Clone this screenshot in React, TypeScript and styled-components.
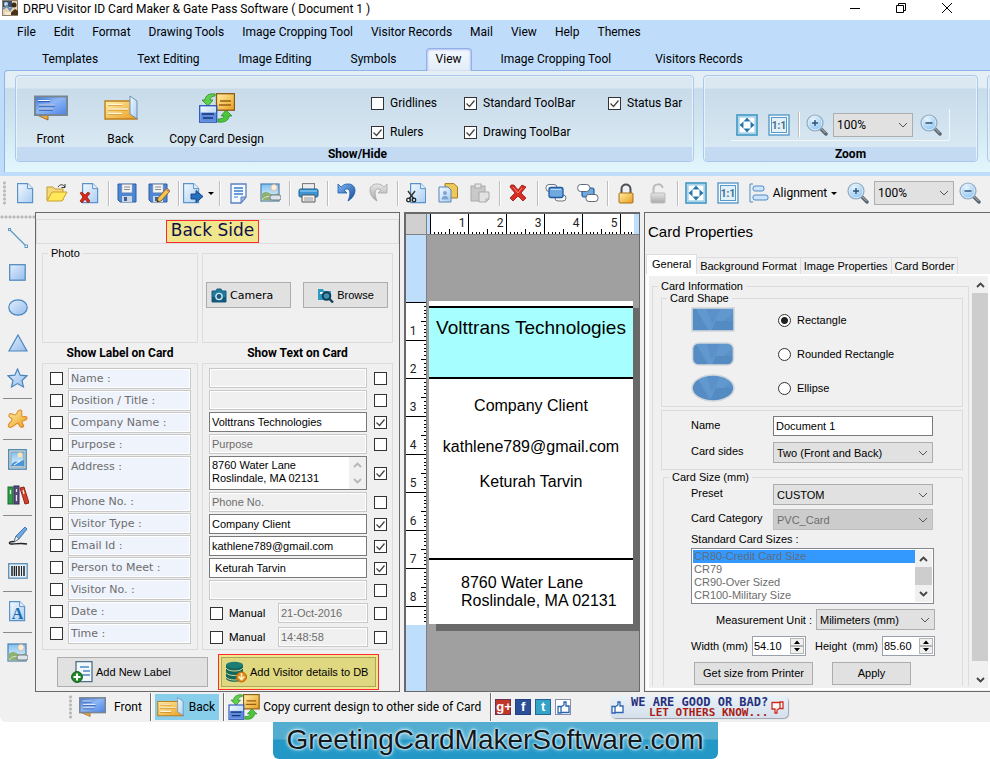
import React from "react";
import styled, { createGlobalStyle, css } from "styled-components";

const UI = 'Roboto, "Open Sans", sans-serif';
const SANS = '"Liberation Sans", Arial, sans-serif';
const WIDE = '"DejaVu Sans", Verdana, sans-serif';

const CHEVRON =
  "url(\"data:image/svg+xml,%3Csvg xmlns='http://www.w3.org/2000/svg' width='10' height='6'%3E%3Cpath d='M1 1l4 4 4-4' fill='none' stroke='%23555'/%3E%3C/svg%3E\")";
const CHECK =
  "url(\"data:image/svg+xml,%3Csvg xmlns='http://www.w3.org/2000/svg' width='11' height='11'%3E%3Cpath d='M1.5 5.5l3 3 5-6' fill='none' stroke='%23444' stroke-width='1.3'/%3E%3C/svg%3E\")";

const Global = createGlobalStyle`
  * { box-sizing: border-box; }
  body { margin: 0; background: #fff; font-family: ${SANS}; font-size: 11px; color: #000; }
  button, input, select, textarea { font: inherit; color: inherit; margin: 0; padding: 0; }
  svg { display: block; flex: none; }
`;

/* ---------- icons ---------- */

const Defs = () => (
  <svg width="0" height="0" aria-hidden="true">
    <defs>
      <linearGradient id="gPage" x1="0" y1="0" x2="1" y2="1">
        <stop offset="0" stopColor="#f4faff" /><stop offset="1" stopColor="#a9cdf3" />
      </linearGradient>
      <linearGradient id="gBlue" x1="0" y1="0" x2="1" y2="1">
        <stop offset="0" stopColor="#3f78dc" /><stop offset=".45" stopColor="#8db6f4" /><stop offset="1" stopColor="#4a83e6" />
      </linearGradient>
      <linearGradient id="gShape" x1="0" y1="0" x2="1" y2="1">
        <stop offset="0" stopColor="#e3effd" /><stop offset="1" stopColor="#94bbec" />
      </linearGradient>
      <linearGradient id="gGold" x1="0" y1="0" x2="1" y2="1">
        <stop offset="0" stopColor="#fff0a8" /><stop offset="1" stopColor="#e99c1c" />
      </linearGradient>
      <linearGradient id="gGray" x1="0" y1="0" x2="0" y2="1">
        <stop offset="0" stopColor="#e6e6e6" /><stop offset="1" stopColor="#a8a8a8" />
      </linearGradient>
      <linearGradient id="gSky" x1="0" y1="0" x2="0" y2="1">
        <stop offset="0" stopColor="#7fc0f2" /><stop offset="1" stopColor="#f2f9ff" />
      </linearGradient>
      <linearGradient id="gArrow" x1="0" y1="0" x2="1" y2="1">
        <stop offset="0" stopColor="#7db8f2" /><stop offset="1" stopColor="#154a9a" />
      </linearGradient>
      <radialGradient id="gLens" cx=".4" cy=".3" r=".8">
        <stop offset="0" stopColor="#e9f5fe" /><stop offset="1" stopColor="#7fbcee" />
      </radialGradient>
    </defs>
  </svg>
);

type IconProps = { w: number; h: number; vb?: string; children: React.ReactNode };
const Icon = ({ w, h, vb, children }: IconProps) => (
  <svg width={w} height={h} viewBox={vb || `0 0 ${w} ${h}`} aria-hidden="true">{children}</svg>
);

const AppIcon = () => (
  <Icon w={16} h={16}>
    <rect x=".5" y=".5" width="15" height="15" fill="#e7d3b4" stroke="#8c7d68" />
    <rect x="1" y="1" width="9" height="6" fill="#39506e" />
    <circle cx="4" cy="4" r="2" fill="#c9d9ea" /><path d="M1 9l4-3 3 4 2-3" stroke="#6a8fb5" strokeWidth="2" fill="none" />
    <circle cx="12" cy="5" r="2.5" fill="#3d2a16" /><path d="M6 15l7-6 3 2v4z" fill="#4a3418" /><path d="M3 12h6v3H3z" fill="#f5ead0" />
  </Icon>
);
const FrontIcon = ({ w = 34, h = 26 }: { w?: number; h?: number }) => (
  <Icon w={w} h={h} vb="0 0 34 26">
    <path d="M3 20h11v5z" fill="#f2a93b" stroke="#8a5a1c" strokeWidth=".8" />
    <rect x="1" y="1.500" width="32" height="18.500" fill="url(#gBlue)" stroke="#788694" strokeWidth="2" />
    <path d="M4 6h12M5 10.500h16M5 14.500h14" stroke="#2f5fb8" strokeWidth="2.400" />
    <path d="M4 5.500h12M5 10h16M5 14h14" stroke="#fff" strokeWidth="1.200" />
  </Icon>
);
const BackIcon = ({ w = 34, h = 26 }: { w?: number; h?: number }) => (
  <Icon w={w} h={h} vb="0 0 34 26">
    <path d="M1 6h27l5 18H1z" fill="url(#gGold)" stroke="#c07f1c" strokeWidth="1.400" />
    <path d="M26 1l7 5v18l-7-5z" fill="url(#gPage)" stroke="#6d8fb3" />
    <path d="M4 10h14M4 14.500h20M4 19h14" stroke="#d08a20" strokeWidth="2.200" />
    <path d="M4 9.500h14M4 14h20M4 18.500h14" stroke="#fff8dc" strokeWidth="1.300" />
  </Icon>
);
const SwapIcon = ({ w = 36, h = 30 }: { w?: number; h?: number }) => (
  <Icon w={w} h={h} vb="0 0 36 30">
    <path d="M16 1C10 0 6 3 6 7H3l6 6 5-6h-3c0-2 2-4 5-4z" fill="#5fd04a" stroke="#2c8a24" strokeWidth=".8" />
    <path d="M19 29c7 1 11-2 11-6h3l-6-6-5 6h3c0 2-2 3-6 3z" fill="#4cc63a" stroke="#2c8a24" strokeWidth=".8" />
    <rect x="17.500" y=".7" width="18" height="16.500" fill="url(#gGold)" stroke="#8a5a10" strokeWidth="1.300" />
    <path d="M21 8h11M20 12h12" stroke="#9a5d10" strokeWidth="1.400" />
    <rect x=".7" y="12.700" width="17" height="16.500" fill="url(#gPage)" stroke="#2a56b4" strokeWidth="1.300" />
    <path d="M1.500 19.500h15.500v9H1.500z" fill="#5e8be0" /><path d="M3 21h12M4 25h10" stroke="#17346f" strokeWidth="1.400" />
  </Icon>
);
const FitIcon = () => (
  <Icon w={22} h={22}>
    <rect x="1" y="1" width="20" height="20" fill="#cfe9f5" stroke="#3f97c4" strokeWidth="1.600" />
    <rect x="3" y="3" width="16" height="16" fill="#fff" stroke="#6fb3d6" strokeWidth=".8" />
    <path d="M11 3.500l3.500 4h-7zM11 18.500l3.500-4h-7zM3.500 11l4-3.500v7zM18.500 11l-4-3.500v7z" fill="#2573a9" />
    <path d="M7.500 7.500h7v7h-7z" fill="none" stroke="#9cc7de" strokeWidth=".6" />
  </Icon>
);
const OneIcon = () => (
  <Icon w={22} h={22}>
    <rect x="1" y="1" width="20" height="20" fill="#f3f9fd" stroke="#5b9ac8" strokeWidth="1.400" />
    <rect x="3.500" y="3.500" width="15" height="15" fill="#e2f0f8" stroke="#5b9ac8" />
    <text x="11" y="15" textAnchor="middle" fontSize="10" fontWeight="700" fontFamily={UI} fill="#3c6f8c">1:1</text>
  </Icon>
);
const Lens = ({ plus }: { plus?: boolean }) => (
  <Icon w={22} h={22}>
    <path d="M14.500 14.500l5.500 5.500" stroke="#5c6670" strokeWidth="3.400" strokeLinecap="round" />
    <path d="M14 13.500l5.500 5.500" stroke="#b9c2ca" strokeWidth="1" />
    <circle cx="9" cy="9" r="8" fill="url(#gLens)" stroke="#93a9bc" strokeWidth="1.200" />
    <circle cx="9" cy="9" r="6.800" fill="none" stroke="#e3f1fb" strokeWidth=".8" />
    <path d={plus ? "M6 9h6M9 6v6" : "M5.500 9h7"} stroke="#2c4f74" strokeWidth="1.400" />
  </Icon>
);
const Page = () => (
  <>
    <path d="M.6.6h10l5 5v14H.6z" fill="url(#gPage)" stroke="#5b93c9" strokeWidth="1.200" />
    <path d="M10.600.6v5h5" fill="#e8f3fd" stroke="#5b93c9" />
  </>
);
const NewIcon = () => <Icon w={17} h={21}><Page /></Icon>;
const OpenIcon = () => (
  <Icon w={22} h={20}>
    <path d="M1 17V4h6l2 2h8v11z" fill="#f6d978" stroke="#c09a30" /><path d="M1 18L6 9h15l-5 9z" fill="#ffe85a" stroke="#c9a02c" />
    <path d="M12 4c2-3 5-3 7 0M19 1v3.500h-3.500" stroke="#333" fill="none" />
  </Icon>
);
const RedX = () => (
  <Icon w={18} h={18}>
    <path d="M2 1l3 0 4 5 4-5 4 2-5 6 5 5-3 3-5-5-5 5-3-3 5-5-5-6z" fill="#dd2c20" stroke="#8d1a12" strokeWidth=".8" />
    <path d="M4 3l5 6 4-5" stroke="#f58a80" fill="none" />
  </Icon>
);
const DelDocIcon = () => (
  <Icon w={20} h={21}>
    <g transform="translate(3 0)"><Page /></g>
    <path d="M1 10l2-1 3 3 3-3 2 1.500-3 3.500 3 4-2 2-3-4-3 4-2-2 3-4z" fill="#d8281c" stroke="#8d1a12" strokeWidth=".7" />
  </Icon>
);
const Disk = () => (
  <>
    <path d="M1 1h18v18H3l-2-2z" fill="#4d86d4" stroke="#2f5da8" /><rect x="5" y="1.500" width="10" height="8" fill="#f3f3f3" stroke="#b5b5b5" strokeWidth=".6" />
    <path d="M7 4h6M7 6.500h6" stroke="#8a8a8a" /><rect x="5" y="13" width="10" height="6" fill="#cdd6e0" /><rect x="7" y="14" width="3" height="4" fill="#3f5f90" />
  </>
);
const Pencil = () => (
  <>
    <path d="M19 5l3 3-9 10-4 1 1-4z" fill="#f6c453" stroke="#7b5a1c" strokeWidth=".9" /><path d="M19 5l3 3-1.500 1.500-3-3z" fill="#c98a76" /><path d="M9 19l.6-2 1.600 1.400z" fill="#222" />
  </>
);
const SaveIcon = () => <Icon w={20} h={20}><Disk /></Icon>;
const SaveEditIcon = () => <Icon w={22} h={20}><Disk /><Pencil /></Icon>;
const ExportIcon = () => (
  <Icon w={21} h={21}>
    <Page /><path d="M8 11h5V7.500l7 6-7 6V16H8z" fill="#2470bd" stroke="#143f7d" strokeWidth=".9" />
  </Icon>
);
const NoteIcon = () => (
  <Icon w={17} h={21}>
    <path d="M1 1h15v13l-5 6H1z" fill="#f4f9ff" stroke="#5c7fc0" strokeWidth="1.300" /><path d="M4 5h9M4 8h9M4 11h9" stroke="#3a7cd0" strokeWidth="1.400" />
    <path d="M16 14h-5v6z" fill="#9dbde8" stroke="#5c7fc0" /><path d="M4 14h4" stroke="#3a7cd0" />
  </Icon>
);
const PictureIcon = () => (
  <Icon w={21} h={20}>
    <rect x="1" y="1" width="18" height="17" fill="url(#gSky)" stroke="#4c7fb2" strokeWidth="1.200" />
    <path d="M1.500 11c5-4 7-1 10 0s5 0 7-1v7.500h-17z" fill="#8fb074" /><path d="M2 17c3-4 7-4 10-3" stroke="#dbe9cb" fill="none" />
    <circle cx="14" cy="4.500" r="3" fill="#fff3df" stroke="#e8b48a" strokeWidth=".8" /><rect x="10" y="12" width="11" height="5" rx="2" fill="#dfe4ea" stroke="#6a7580" strokeWidth=".9" />
  </Icon>
);
const PrinterIcon = () => (
  <Icon w={21} h={20}>
    <rect x="4.500" y=".6" width="12" height="8" fill="#ececec" stroke="#777" /><rect x="1" y="6" width="19" height="8" rx="1.500" fill="#3b95d2" stroke="#1b5f96" />
    <path d="M2 8h17" stroke="#a6d6f5" /><path d="M4 12h13v7H4z" fill="#f2f2f2" stroke="#555" /><path d="M6 15h9M6 17h9" stroke="#999" />
  </Icon>
);
const UndoIcon = ({ gray }: { gray?: boolean }) => (
  <Icon w={19} h={20}>
    <path
      transform={gray ? "translate(19 0) scale(-1 1)" : undefined}
      d="M1 1v9h9L7 7c5-3 8 1 4 11 10-6 9-18-1-17-2 0-4 1-6 3z"
      fill={gray ? "url(#gGray)" : "url(#gArrow)"} stroke={gray ? "#a6a6a6" : "#1f5cae"} strokeWidth=".8"
    />
  </Icon>
);
const CutIcon = () => (
  <Icon w={20} h={21}>
    <g transform="translate(4 0)"><Page /></g>
    <path d="M2 8l6 8M9 8l-6 8" stroke="#333" strokeWidth="1.400" /><circle cx="2.500" cy="17" r="1.800" fill="none" stroke="#222" strokeWidth="1.300" /><circle cx="8" cy="17" r="1.800" fill="none" stroke="#222" strokeWidth="1.300" />
  </Icon>
);
const CopyIcon = () => (
  <Icon w={20} h={20}>
    <path d="M7 .6h9l3.500 3.500V15H7z" fill="#ecc95a" stroke="#a37c22" /><path d="M1 4h9l3 3v12H1z" fill="url(#gPage)" stroke="#5b84b5" />
    <circle cx="7" cy="10" r="2" fill="#7fa4d2" /><path d="M3.500 16.500c0-5 7-5 7 0z" fill="#7fa4d2" />
  </Icon>
);
const PasteIcon = () => (
  <Icon w={20} h={20}>
    <rect x="1" y="3" width="14" height="15" fill="#c9c9c9" stroke="#a9a9a9" /><rect x="5" y="1" width="6" height="4" fill="#e5e5e5" stroke="#a9a9a9" /><path d="M9 9h10v7l-3 3H9z" fill="#e2e2e2" stroke="#a9a9a9" /><path d="M19 16h-3v3" fill="none" stroke="#a9a9a9" />
  </Icon>
);
const LayerFrontIcon = () => (
  <Icon w={22} h={20}>
    <rect x="1" y="1.500" width="11" height="7" rx="3" fill="#f6f6f6" stroke="#6a7885" /><rect x="10" y="12" width="11" height="6" rx="3" fill="#f6f6f6" stroke="#6a7885" />
    <rect x="4" y="4.500" width="14" height="10" rx="2" fill="#6fa9e0" stroke="#1f5c9f" strokeWidth="1.300" /><path d="M6 6.500h10" stroke="#b9dafa" />
  </Icon>
);
const LayerBackIcon = () => (
  <Icon w={22} h={20}>
    <rect x="5" y="5" width="12" height="9" rx="2" fill="#6fa9e0" stroke="#1f5c9f" strokeWidth="1.200" />
    <rect x=".7" y="1.500" width="12" height="7" rx="3" fill="#fff" stroke="#5c6a77" /><rect x="9" y="11.500" width="12" height="7" rx="3" fill="#fff" stroke="#5c6a77" />
  </Icon>
);
const LockIcon = ({ open }: { open?: boolean }) => (
  <Icon w={16} h={21}>
    <path d={open ? "M3.500 11V6c0-6 9-6 9-1" : "M3.500 11V6c0-6 9-6 9 0v5"} fill="none" stroke={open ? "#b9b9b9" : "#4a4f55"} strokeWidth="2" />
    <rect x="1" y="10" width="14" height="10" rx="1" fill={open ? "url(#gGray)" : "url(#gGold)"} stroke={open ? "#bcbcbc" : "#a96e12"} />
  </Icon>
);
const AlignIcon = () => (
  <Icon w={20} h={20}>
    <path d="M4 1H1v18h3" fill="none" stroke="#4c8bc4" /><rect x="4" y="3" width="11" height="5" rx="2" fill="#cfe4fa" stroke="#4c8bc4" /><rect x="4" y="12" width="15" height="5" rx="2" fill="#cfe4fa" stroke="#4c8bc4" />
  </Icon>
);
const LineIcon = () => (
  <Icon w={20} h={20}><path d="M2 2l16 16" stroke="#5a9ac4" strokeWidth="1.300" /><rect x=".5" y=".5" width="2" height="2" fill="#fff" stroke="#5a9ac4" /><rect x="17" y="17" width="2.500" height="2.500" fill="#fff" stroke="#5a9ac4" /></Icon>
);
const SquareIcon = () => <Icon w={17} h={17}><rect x=".7" y=".7" width="15.500" height="15.500" fill="url(#gShape)" stroke="#4a86bd" strokeWidth="1.200" /></Icon>;
const EllipseIcon = () => <Icon w={20} h={17}><ellipse cx="10" cy="8.500" rx="9.200" ry="7.700" fill="url(#gShape)" stroke="#4a86bd" strokeWidth="1.200" /></Icon>;
const TriangleIcon = () => <Icon w={20} h={18}><path d="M10 1l9 16H1z" fill="url(#gShape)" stroke="#4a86bd" strokeWidth="1.200" /></Icon>;
const StarIcon = () => <Icon w={21} h={20}><path d="M10.500 1l2.700 6.200 6.800.6-5 4.700 1.500 6.500-6-3.400-6 3.400L6 12.500 1 7.800l6.800-.6z" fill="url(#gShape)" stroke="#4a86bd" strokeWidth="1.200" /></Icon>;
const ClipIcon = () => <Icon w={21} h={20}><path d="M13 1c3 0 1 4 2 6s5-1 5 2-5 2-5 4 3 4 1 5-4-1-5-4c-2 0-6 6-9 4s4-6 3-8-4-1-3-4 4 0 6 0 2-5 5-5z" fill="url(#gGold)" stroke="#e08a2a" strokeWidth="1.100" /></Icon>;
const FrameIcon = () => (
  <Icon w={19} h={21}>
    <rect x=".7" y=".7" width="17.500" height="19.500" fill="#cfe0ea" stroke="#4a87ad" strokeWidth="1.300" /><rect x="3" y="3" width="13" height="15" fill="url(#gSky)" stroke="#8a9aa6" />
    <circle cx="12" cy="6" r="2.500" fill="#ffe7ae" /><path d="M3 17c2-5 5-5 7-4s4-2 6-2v6z" fill="#4a95d8" /><path d="M6 16l6-4" stroke="#fff" />
  </Icon>
);
const BooksIcon = () => (
  <Icon w={22} h={20}>
    <rect x="1" y="2" width="5" height="17" fill="#2f9d48" stroke="#1c6a2e" /><rect x="7" y="1" width="5" height="18" fill="#5a4a80" stroke="#332a50" /><path d="M13 3l4-1 5 16-4 1z" fill="#d8402c" stroke="#8a2416" />
    <path d="M3.500 5v4M9.500 4v3M9.500 10v6M16 5l1 4" stroke="#e8e8e8" strokeWidth="1.300" />
  </Icon>
);
const PenIcon = () => (
  <Icon w={20} h={20}><path d="M17 1l2 2-8 10-5 3 2-6z" fill="#6fa8e2" stroke="#3a6fa8" strokeWidth=".9" /><path d="M6 16l2-6 3 3z" fill="#e4edf5" stroke="#555" strokeWidth=".6" /><path d="M6 15.500c-6 0-6 3-1 2.500s9-1 14 0" stroke="#222" strokeWidth="1.400" fill="none" /></Icon>
);
const BarcodeIcon = () => (
  <Icon w={20} h={16}><rect x=".7" y=".7" width="18.500" height="14.500" fill="#e4eef6" stroke="#5a8fb8" strokeWidth="1.300" /><path d="M4 3v10M6.500 3v10M11 3v10M16 3v10" stroke="#222" strokeWidth="1.500" /><path d="M8.500 3v10M13.500 3v10" stroke="#222" /></Icon>
);
const LetterIcon = () => (
  <Icon w={17} h={21}><Page /><text x="8.500" y="18" textAnchor="middle" fontSize="16" fontWeight="700" fontFamily='"Liberation Serif", serif' fill="#1c6cae">A</text></Icon>
);
const CameraIcon = () => (
  <Icon w={16} h={15}><path d="M1 3h4l1-2h4l1 2h4v11H1z" fill="#1f7a9e" stroke="#175d7c" /><path d="M1 9h14v5H1z" fill="#11597a" /><circle cx="8" cy="8.500" r="3.800" fill="#cfe9f3" /><circle cx="8" cy="8.500" r="2.400" fill="#1b5b7c" /></Icon>
);
const BrowseIcon = () => (
  <Icon w={17} h={15}><path d="M1 12V1h5l1 2h7v9z" fill="#2e9ac4" /><path d="M3 4h10v2H3z" fill="#e3f5fb" /><circle cx="9.500" cy="8" r="3.800" fill="#3f93b4" stroke="#123e54" strokeWidth="2" /><path d="M12.500 11l3.500 3.500" stroke="#123e54" strokeWidth="2.400" /></Icon>
);
const AddLabelIcon = () => (
  <Icon w={22} h={22}><path d="M5 .7h16v20H5z" fill="#f2f7fb" stroke="#4c7088" strokeWidth="1.300" /><path d="M9 6h9M12 10h7M9 14h10" stroke="#4f8ac2" strokeWidth="1.400" /><circle cx="6" cy="16" r="5.400" fill="#1f8a28" stroke="#0f5a18" /><path d="M2.500 16h7M6 12.500v7" stroke="#fff" strokeWidth="2" /></Icon>
);
const DbIcon = () => (
  <Icon w={22} h={22}><path d="M1 4v13c0 5 17 5 17 0V4z" fill="#12685f" /><ellipse cx="9.500" cy="4" rx="8.500" ry="3.300" fill="#1b7d74" /><path d="M1 7c2 4 15 4 17 0M1 11.500c2 4 15 4 17 0M1 16c2 4 15 4 17 0" stroke="#dfd98a" strokeWidth="1" fill="none" /><circle cx="16.500" cy="16" r="5" fill="#e08a1c" stroke="#b9680c" /><path d="M16.500 12v6M13.500 15.500l3 3 3-3" stroke="#fff3c4" strokeWidth="1.700" fill="none" /></Icon>
);
const Facets = () => (
  <><rect width="44" height="28" fill="#5b91c8" /><path d="M3 0h12l6 18L30 0h14v5L14 28z" fill="#6198ce" /><path d="M30 0L19 28h25V14H24z" fill="#558bc3" /><path d="M0 0h4l14 24-2 4H0z" fill="#568cc4" /></>
);
const ShapeIcon = ({ kind }: { kind: "rect" | "round" | "oval" }) => {
  const shape = (extra: object) =>
    kind === "rect" ? <rect x="1" y="1" width="42" height="23" {...extra} />
      : kind === "round" ? <rect x="1.500" y="1" width="41" height="22" rx="6" {...extra} />
      : <ellipse cx="22" cy="14" rx="21" ry="13" {...extra} />;
  const h = kind === "oval" ? 28 : kind === "rect" ? 26 : 24;
  return (
    <Icon w={44} h={h}>
      <clipPath id={`clip-${kind}`}>{shape({})}</clipPath>
      <g clipPath={`url(#clip-${kind})`}><Facets /></g>
      {shape({ fill: "none", stroke: "#d3d7db", strokeWidth: 1.6 })}
    </Icon>
  );
};
const Thumb = ({ down }: { down?: boolean }) => (
  <Icon w={13} h={13}>
    <path transform={down ? "rotate(180 6.500 6.500)" : undefined} d="M1 5.500h3v6.500H1zM4 6l3-2V1h2v4h3v6.500H4" fill="#fff" stroke={down ? "#d02a20" : "#2a63b0"} strokeWidth="1.300" />
  </Icon>
);

/* ---------- shared controls ---------- */

const CheckBox = styled.input.attrs({ type: "checkbox" })`
  appearance: none;
  flex: none;
  width: 13px;
  height: 13px;
  border: 1px solid #333;
  background: #fff center no-repeat;
  &:checked { background-image: ${CHECK}; }
`;

const Combo = styled.select<{ $w?: number; $h?: number; $size?: number }>`
  appearance: none;
  width: ${(p) => (p.$w ? `${p.$w}px` : "100%")};
  height: ${(p) => p.$h || 21}px;
  padding: 0 22px 0 3px;
  border: 1px solid #adadad;
  border-radius: 0;
  background: #e1e1e1 ${CHEVRON} right 4px center no-repeat;
  font-size: ${(p) => p.$size || 11}px;
  &:disabled { background-color: #ccc; color: #6d6d6d; border-color: #bfbfbf; opacity: 1; }
`;

const ZoomCombo = styled(Combo)`font-family: ${UI};`;

const PlainButton = styled.button`
  display: flex;
  align-items: center;
  justify-content: center;
  border: 0;
  background: none;
`;

/* ---------- title, menu, tabs ---------- */

const Shell = styled.div`display: flex; flex-direction: column; min-height: 100vh; overflow: hidden;`;

const TitleBar = styled.header`
  display: flex;
  align-items: flex-start;
  gap: 5px;
  height: 20px;
  padding: 0 23px 0 2px;
  background: #fff;
  font: 12px/18px ${UI};
`;
const WindowTitle = styled.h1`flex: 1; margin: 0; font: inherit;`;
const WindowButton = styled(PlainButton)`width: 41px; height: 15px;`;

const MenuBar = styled.nav`
  display: flex;
  height: 24px;
  padding-left: 8px;
  background: #bfddfb;
  font: 12px/24px ${UI};
`;
const MenuLink = styled.a`padding: 0 9px; color: #000; text-decoration: none; white-space: nowrap;`;

const TabBar = styled.div`
  display: flex;
  align-items: flex-end;
  height: 26px;
  padding-left: 22px;
  background: #bfddfb;
`;
const RibbonTab = styled.button<{ $on?: boolean }>`
  height: 23px;
  margin: 0 9px -1px 10px;
  padding: 0 9px 3px;
  border: 1px solid transparent;
  border-bottom: 0;
  border-radius: 4px 4px 0 0;
  background: none;
  font: 12px/18px ${UI};
  white-space: nowrap;
  &:last-child { margin-left: 15px; }
  ${(p) => p.$on && css`
    position: relative;
    border-color: #8fb0ea;
    background: linear-gradient(#f4f8ff, #e2edf6);
    box-shadow: inset 1px 1px 2px #b8c4f0, inset -1px 0 2px #b8c4f0;
  `}
`;

/* ---------- ribbon ---------- */

const Ribbon = styled.section`
  display: grid;
  grid-template-columns: minmax(0, 1fr) 275px 12px;
  column-gap: 9px;
  height: 102px;
  margin: 0 -9px 0 4px;
  padding: 4px 0 10px 10px;
  border: 1px solid #8fb5e8;
  border-width: 1px 0 0 1px;
  border-radius: 4px 0 0 0;
  background: linear-gradient(#e4eef5 0 16px, #c8dcec 18px, #d3e8f1 60%, #e2f7fc);
  overflow: hidden;
`;
const RibbonWrap = styled.div`background: #bfddfb; padding-bottom: 4px;`;
const Panel = styled.div`
  display: flex;
  flex-direction: column;
  border: 1px solid #a9c8ea;
  border-radius: 4px;
  background: linear-gradient(#dbe8f2 0 12px, #c8dbea 13px, #d6e6f1 75%, #dff2f9);
  box-shadow: inset 0 0 0 1px #e8f2fa;
`;
const PanelBody = styled.div`display: flex; flex: 1;`;
const PanelCaption = styled.h2<{ $indent?: number }>`
  margin: 0 1px;
  height: 14px;
  padding-left: ${(p) => p.$indent || 0}px;
  background: #c3daf2;
  text-align: center;
  font: bold 12px/15px ${UI};
`;
const BigButton = styled.button<{ $w: number }>`
  display: grid;
  grid-template-rows: 32px 16px;
  row-gap: 7px;
  place-items: center;
  align-self: start;
  width: ${(p) => p.$w}px;
  padding: 16px 0 0;
  border: 0;
  background: none;
  font: 12px/16px ${UI};
  white-space: nowrap;
`;
const CheckGrid = styled.div`
  display: grid;
  grid-template: 15px 15px / 93px 144px auto;
  row-gap: 14px;
  margin: 20px 0 0 94px;
  align-content: start;
`;
const CheckLabel = styled.label`
  display: flex;
  align-items: center;
  gap: 6px;
  font: 12px/15px ${UI};
  white-space: nowrap;
`;
const ZoomStrip = styled.div`
  display: flex;
  align-items: center;
  align-self: flex-start;
  height: 32px;
  margin: 33px 0 0 27px;
  border: 1px solid #f2f7fb;
  border-width: 0 1px 1px 0;
  border-radius: 0 0 3px 0;
`;
const ToolButton = styled(PlainButton)<{ $w?: number; $h?: number }>`
  flex: none;
  width: ${(p) => p.$w || 32}px;
  height: ${(p) => p.$h || 32}px;
  gap: 4px;
`;
const VLine = styled.span<{ $w?: number; $dark?: boolean; $h?: number }>`
  display: flex;
  flex: none;
  justify-content: center;
  width: ${(p) => p.$w || 6}px;
  height: ${(p) => p.$h || 25}px;
  &::before { content: ""; width: 1px; background: ${(p) => (p.$dark ? "#707070" : "#bdbdbd")}; box-shadow: 1px 0 #fff; }
`;
const HLine = styled.span`
  display: flex;
  align-items: center;
  width: 29px;
  height: 6px;
  &::before { content: ""; flex: 1; height: 1px; background: #8a8a8a; }
`;
const Caret = styled.span`border: 3px solid transparent; border-top-color: #000; border-bottom: 0;`;

/* ---------- toolbars ---------- */

const Toolbar = styled.div`
  display: flex;
  align-items: center;
  height: 36px;
  padding-bottom: 2px;
  background: #f0f0f0;
  font: 12px/16px ${UI};
`;
const Grip = styled.span<{ $side?: boolean; $w?: number }>`
  flex: none;
  width: ${(p) => (p.$side ? 35 : p.$w || 9)}px;
  height: ${(p) => (p.$side ? 8 : 24)}px;
  background: ${(p) =>
    p.$side
      ? "radial-gradient(circle, #b8b8b8 1px, transparent 2px) 0 3px / 4px 4px repeat-x"
      : "radial-gradient(circle, #b8b8b8 1px, transparent 2px) 3px 0 / 3px 4px repeat-y"};
`;
const SideBar = styled.aside`display: flex; flex-direction: column; align-items: center; background: #f0f0f0;`;

const Work = styled.main`
  display: grid;
  grid-template-columns: 35px 365px minmax(0, 1fr) 346px;
  height: 480px;
  background: #f0f0f0;
`;

/* ---------- visitor form ---------- */

const FormPane = styled.section`
  display: flex;
  flex-direction: column;
  border: 1px solid #696969;
  padding-top: 6px;
`;
const SideHeader = styled.div`
  display: flex;
  justify-content: center;
  padding-right: 10px;
  height: 25px;
  border: 1px solid #dcdcdc;
`;
const SideName = styled.h2`
  margin: 0;
  height: 23px;
  padding: 0 4px;
  border: 1px solid #ff2a2a;
  background: #f0e68c;
  color: #10104a;
  font: 17px/18px ${WIDE};
`;
const TwoCols = styled.div`
  display: grid;
  grid-template-columns: 156fr 191fr;
  column-gap: 4px;
  padding: 0 6px;
`;
const Group = styled.fieldset<{ $open?: boolean }>`
  min-width: 0;
  margin: 0;
  padding: 0;
  border: 1px solid #dcdcdc;
  ${(p) => p.$open && "border-bottom: 0;"}
`;
const Legend = styled.legend`margin-left: 5px; padding: 0 3px; line-height: 12px; font-size: 11px;`;
const PhotoGroup = styled(Group)`height: 96px; margin-top: 3px;`;
const PhotoButtons = styled(Group)`
  display: flex;
  align-items: flex-start;
  justify-content: space-between;
  height: 90px;
  margin-top: 9px;
  padding: 28px 4px 0 3px;
`;
const PushButton = styled.button<{ $w?: number; $h?: number; $wide?: boolean }>`
  display: flex;
  align-items: center;
  justify-content: ${(p) => (p.$wide ? "flex-start" : "center")};
  gap: 3px;
  width: ${(p) => p.$w || 85}px;
  height: ${(p) => p.$h || 26}px;
  padding: 0 4px;
  border: 1px solid #adadad;
  background: #e1e1e1;
  font: 11px/13px ${(p) => (p.$wide ? WIDE : SANS)};
  white-space: nowrap;
`;
const ColumnTitle = styled.h3`margin: 0; text-align: center; font: bold 12px/20px ${UI};`;
const List = styled(Group)<{ $left?: boolean }>`
  display: flex;
  flex-direction: column;
  gap: ${(p) => (p.$left ? 1 : 2)}px;
  height: 287px;
  padding: ${(p) => (p.$left ? "4px 6px 0 7px" : "4px 5px 0 6px")};
`;
const Row = styled.div<{ $gap: number; $h: number }>`display: flex; align-items: center; gap: ${(p) => p.$gap}px; height: ${(p) => p.$h}px;`;
const Caption = styled.input`
  flex: 1;
  min-width: 0;
  height: 100%;
  padding: 1px 2px;
  border: 1px solid #c8c8c8;
  background: #eff3fc;
  color: #6d6d6d;
  font: 11px/13px ${WIDE};
  box-shadow: inset 0 0 0 1px #fff;
`;
const TallCaption = styled(Caption).attrs({ as: "textarea" })`resize: none; overflow: hidden; padding: 3px 2px;`;
const Field = styled.input<{ $w?: number }>`
  flex: ${(p) => (p.$w ? "none" : 1)};
  width: ${(p) => (p.$w ? `${p.$w}px` : "auto")};
  min-width: 0;
  height: 20px;
  padding: 0 2px;
  border: 1px solid #7a7a7a;
  background: #fff;
  font: 11px/13px ${SANS};
  &:disabled { background: #f0f0f0; border-color: #c8c8c8; color: #6d6d6d; box-shadow: inset 0 0 0 1px #fff; }
`;
const AddressBox = styled.div`display: flex; flex: 1; height: 34px; border: 1px solid #7a7a7a; background: #fff;`;
const AddressText = styled.textarea`flex: 1; min-width: 0; resize: none; border: 0; overflow: hidden; padding: 2px; font: 11px/13px ${SANS};`;
const ScrollTrack = styled.div<{ $w: number }>`
  display: flex;
  flex: none;
  flex-direction: column;
  justify-content: space-between;
  width: ${(p) => p.$w}px;
  background: #f0f0f0;
`;
const ScrollButton = styled(PlainButton)<{ $h: number }>`width: 100%; height: ${(p) => p.$h}px;`;
const ScrollThumb = styled.div<{ $grow: number }>`flex: ${(p) => p.$grow}; background: #cdcdcd;`;
const ScrollRest = styled.div<{ $grow: number }>`flex: ${(p) => p.$grow};`;
const ManualLabel = styled(CheckLabel)`width: 69px; padding-left: 1px; font: 11px/13px ${UI};`;
const FormActions = styled.div`display: flex; align-items: center; gap: 10px; padding: 3px 0 0 21px; flex: 1;`;
const Highlight = styled.div`padding: 2px; border: 1px solid #ff2a2a; background: #f0e68c;`;
const AddButton = styled(PushButton)`justify-content: flex-start; padding-left: 13px;`;
const DbButton = styled(PushButton)`justify-content: flex-start; padding-left: 3px; background: #e0d880; border-color: #aba55e;`;

/* ---------- card canvas ---------- */

const CanvasPane = styled.section`
  display: grid;
  grid-template: 20px minmax(0, 1fr) / 20px minmax(0, 1fr);
  gap: 1px;
  margin: 0 4px;
  border: 1px solid #696969;
  border-width: 2px 1px 1px 2px;
  background: #808080;
`;
const Corner = styled.div`background: #d0d0d0;`;
const RulerBox = styled.div`background: #bfdefc; overflow: hidden;`;
const Desk = styled.div`padding: 66px 0 0 2px; background: #a0a0a0; overflow: hidden;`;
const Card = styled.article`
  width: 204px;
  height: 323px;
  padding-top: 5px;
  background: #fff;
  box-shadow: 7px 7px 0 #696969;
  text-align: center;
  font: 16px/18px ${SANS};
`;
const CardHead = styled.h2`
  margin: 0 0 18px;
  height: 73px;
  padding-top: 9px;
  border: 2px solid #000;
  border-width: 2px 0;
  background: #a6fffe;
  font: 19px/22px ${SANS};
  white-space: nowrap;
`;
const CardLine = styled.p<{ $after: number }>`margin: 0 0 ${(p) => p.$after}px;`;
const CardFoot = styled.address`padding: 14px 0 0 32px; border-top: 2px solid #000; text-align: left; font-style: normal; white-space: nowrap;`;

const CM = 38;
const Ruler = ({ cm, length, vertical }: { cm: number; length: number; vertical?: boolean }) => {
  const start = vertical ? 67 : 3;
  const ticks: React.ReactNode[] = [];
  for (let mm = 0; mm * 3.8 < length; mm++) {
    const at = start + Math.round(mm * (CM / 10)) + 0.5;
    const len = mm % 10 === 0 ? 20 : mm % 5 === 0 ? 5 : 2;
    ticks.push(<path key={mm} stroke="#000" d={vertical ? `M${20 - len} ${at}H20` : `M${at} ${20 - len}V20`} />);
  }
  const nums = Array.from({ length: cm }, (_, i) => i + 1);
  return (
    <Icon w={vertical ? 20 : start + length} h={vertical ? start + length : 20}>
      {vertical ? <rect y={start} width="20" height={length} fill="#fff" /> : <rect x={start} width={length} height="20" fill="#fff" />}
      {ticks}
      {nums.map((n) => (
        <text key={n} fontFamily={UI} fontSize="12" fill="#222" textAnchor="middle"
          x={vertical ? 7 : start + n * CM - 6} y={vertical ? start + n * CM - 5 : 13}>{n}</text>
      ))}
    </Icon>
  );
};

/* ---------- properties ---------- */

const PropsPane = styled.section`
  display: flex;
  flex-direction: column;
  min-width: 0;
  border: 1px solid #696969;
  border-right: 0;
  padding: 0 0 1px 1px;
`;
const PropsTitle = styled.h2`margin: 8px 0 12px 2px; font: 15px/21px ${SANS};`;
const PropTabs = styled.div`display: flex; align-items: flex-end; height: 20px;`;
const PropTab = styled.button<{ $on?: boolean }>`
  height: ${(p) => (p.$on ? 20 : 17)}px;
  padding: 0 ${(p) => (p.$on ? 5 : 3)}px;
  border: 1px solid #dcdcdc;
  border-bottom: 0;
  border-left-width: ${(p) => (p.$on ? 1 : 0)}px;
  background: ${(p) => (p.$on ? "#fff" : "#f0f0f0")};
  font: 11px/15px ${SANS};
  white-space: nowrap;
`;
const PropPage = styled.div`display: flex; flex: 1; min-height: 0; padding: 2px 2px 2px 3px; background: #fff;`;
const PropBody = styled.div`flex: 1; min-width: 0; padding: 4px 3px 0; background: #f0f0f0; overflow: hidden;`;
const InfoBody = styled.div`padding: 0 5px 0 8px;`;
const ShapeOption = styled.label`display: grid; grid-template-columns: 44px 13px auto; column-gap: 43px; align-items: center; height: 34px; padding: 0 0 2px 29px;`;
const OptionText = styled.span`margin-left: -37px;`;
const Radio = styled.input.attrs({ type: "radio" })`
  appearance: none;
  width: 13px;
  height: 13px;
  border: 1px solid #333;
  border-radius: 50%;
  background: #fff;
  &:checked { background: radial-gradient(circle, #222 0 3px, #fff 4px); }
`;
const NameGroup = styled(Group)`
  display: grid;
  grid-template-columns: 82px 160px;
  row-gap: 6px;
  align-content: start;
  height: 60px;
  margin: 3px 0 1px;
  padding: 5px 0 0 29px;
`;
const SizeGroup = styled(Group)`margin-left: 2px;`;
const SizeBody = styled.div`padding: 1px 0 1px 27px;`;
const SizeGrid = styled.div`display: grid; grid-template-columns: 82px 160px; row-gap: 4px;`;
const RowLabel = styled.label`line-height: 18px; white-space: nowrap;`;
const SizesBox = styled.div`display: flex; width: 243px; height: 56px; padding: 1px; border: 1px solid #828790; background: #fff;`;
const SizesList = styled.select`
  flex: 1;
  min-width: 0;
  appearance: none;
  border: 0;
  border-radius: 0;
  outline: 0;
  overflow: hidden;
  background: #fff;
  opacity: 1;
  font: 11px/13px ${SANS};
  option { min-height: 13px; padding: 0 1px; border-radius: 0; font: 11px/13px ${SANS}; color: #6d6d6d; }
  option:checked { background: linear-gradient(#3399ff, #3399ff); color: #5f6d7c; }
`;
const UnitRow = styled.div`display: flex; align-items: center; justify-content: flex-end; gap: 4px; width: 244px; margin-top: 5px;`;
const MeasureRow = styled.div`display: grid; grid-template-columns: 61px 54px 76px 53px; align-items: center; width: 244px; margin: 6px 0;`;
const MeasureLabel = styled.label<{ $indent?: number }>`display: flex; justify-content: space-between; padding: 0 4px 0 ${(p) => p.$indent || 0}px;`;
const Spinner = styled.div`display: flex; height: 20px; padding: 1px; border: 1px solid #9aa0ab; background: #fff;`;
const SpinText = styled.input`flex: 1; width: 0; min-width: 0; border: 0; background: none; font-size: 11px;`;
const SpinKeys = styled.div`display: grid; grid-template-rows: 1fr 1fr; width: 14px;`;
const SpinKey = styled(PlainButton)`border: 1px solid #b5b5b5; background: #f0f0f0;`;
const Actions = styled.div`display: flex; gap: 19px; padding-left: 3px;`;

/* ---------- status bar and footer ---------- */

const StatusBar = styled.footer`
  display: flex;
  align-items: center;
  height: 30px;
  padding-left: 66px;
  border-radius: 0 0 0 6px;
  background: #f0f0f0;
  font: 12px/16px ${UI};
`;
const StatusButton = styled.button<{ $on?: boolean }>`
  display: flex;
  align-items: center;
  gap: ${(p) => (p.$on ? 5 : 8)}px;
  height: 26px;
  padding: 0 4px 0 2px;
  border: 0;
  background: ${(p) => (p.$on ? "#87ceeb" : "none")};
  white-space: nowrap;
`;
const CopyStatus = styled(StatusButton)`gap: 3px; padding-left: 1px;`;
const Social = styled.a<{ $c: string }>`
  display: grid;
  place-items: center;
  width: 16px;
  height: 16px;
  margin-right: 4px;
  border: 1px solid rgba(30, 50, 110, 0.55);
  background: ${(p) => p.$c};
  color: #fff;
  font: bold 13px/14px ${SANS};
  text-decoration: none;
`;
const Feedback = styled.a`
  display: flex;
  align-items: center;
  gap: 3px;
  width: 178px;
  height: 22px;
  margin-left: 35px;
  padding: 0 4px 0 1px;
  border-radius: 5px;
  background: linear-gradient(#e9f1f8, #d5e0ec);
  box-shadow: 1px 1px 1px #9aa3ad;
  text-decoration: none;
  white-space: nowrap;
`;
const FeedbackText = styled.span`display: flex; flex: 1; flex-direction: column; align-items: flex-end;`;
const FeedbackBlue = styled.span`font: bold 12px/11px "DejaVu Sans Mono", monospace; color: #26307c;`;
const FeedbackRed = styled.span`font: bold 11px/10px "DejaVu Sans Mono", monospace; color: #a81c14;`;
const SiteRow = styled.div`display: flex; justify-content: center; background: #fff;`;
const SiteBanner = styled.a`
  width: 445px;
  height: 37px;
  border-radius: 0 0 6px 6px;
  background: linear-gradient(#52add1 0 17px, #2398c6 18px);
  color: #10181c;
  text-align: center;
  font: 28px/36px ${SANS};
  text-decoration: none;
  text-shadow: 0 0 2px #fff, 0 0 3px #e4f6fd, 0 0 5px #bfe6f6;
`;

/* ---------- data ---------- */

const menus = ["File", "Edit", "Format", "Drawing Tools", "Image Cropping Tool", "Visitor Records", "Mail", "View", "Help", "Themes"];
const tabs = ["Templates", "Text Editing", "Image Editing", "Symbols", "View", "Image Cropping Tool", "Visitors Records"];
const checks: [string, boolean][] = [["Gridlines", false], ["Standard ToolBar", true], ["Status Bar", true], ["Rulers", true], ["Drawing ToolBar", true]];
const captions = ["Name :", "Position / Title :", "Company Name :", "Purpose :", "Address :", "Phone No. :", "Visitor Type :", "Email Id :", "Person to Meet :", "Visitor No. :", "Date :", "Time :"];
const texts: { v: string; on?: boolean; tall?: boolean }[] = [
  { v: "" }, { v: "" }, { v: "Volttrans Technologies", on: true }, { v: "Purpose" },
  { v: "8760 Water Lane\nRoslindale, MA 02131", on: true, tall: true }, { v: "Phone No." },
  { v: "Company Client", on: true }, { v: "kathlene789@gmail.com", on: true }, { v: " Keturah Tarvin", on: true }, { v: "" },
];
const manual = ["21-Oct-2016", "14:48:58"];

type Tool = [string, React.ReactNode] | null;
const tools: Tool[] = [
  ["New", <NewIcon />], ["Open", <OpenIcon />], ["Close", <DelDocIcon />], null,
  ["Save", <SaveIcon />], ["Save As", <SaveEditIcon />], null,
  ["Export", <><ExportIcon /><Caret /></>], null,
  ["Notes", <NoteIcon />], ["Picture", <PictureIcon />], null, ["Print", <PrinterIcon />], null,
  ["Undo", <UndoIcon />], ["Redo", <UndoIcon gray />], null,
  ["Cut", <CutIcon />], ["Copy", <CopyIcon />], ["Paste", <PasteIcon />], null, ["Delete", <RedX />], null,
  ["Bring to Front", <LayerFrontIcon />], ["Send to Back", <LayerBackIcon />], null,
  ["Lock", <LockIcon />], ["Unlock", <LockIcon open />], null, ["Fit", <FitIcon />], ["Actual size", <OneIcon />],
];
const sideTools: Tool[] = [
  ["Line", <LineIcon />], ["Rectangle", <SquareIcon />], ["Ellipse", <EllipseIcon />], ["Triangle", <TriangleIcon />], ["Star", <StarIcon />], null,
  ["Symbol", <ClipIcon />], null, ["Frame", <FrameIcon />], ["Library", <BooksIcon />], null,
  ["Signature", <PenIcon />], ["Barcode", <BarcodeIcon />], null, ["Text", <LetterIcon />], null, ["Watermark", <PictureIcon />],
];

const Chevron = ({ up, c = "#444" }: { up?: boolean; c?: string }) => (
  <Icon w={9} h={6}><path d={up ? "M1 5l3.500-3.500L8 5" : "M1 1l3.500 3.500L8 1"} fill="none" stroke={c} strokeWidth="1.800" /></Icon>
);
const Nib = ({ up }: { up?: boolean }) => <Icon w={6} h={4}><path d={up ? "M0 4l3-3.500L6 4z" : "M0 0l3 3.500L6 0z"} /></Icon>;

const Percent = ({ label }: { label: string }) => (
  <ZoomCombo $w={80} $h={24} $size={12} aria-label={label} defaultValue="100%"><option>100%</option></ZoomCombo>
);

const SpinBox = ({ id, value }: { id: string; value: string }) => (
  <Spinner>
    <SpinText id={id} defaultValue={value} />
    <SpinKeys><SpinKey aria-label="Increase"><Nib up /></SpinKey><SpinKey aria-label="Decrease"><Nib /></SpinKey></SpinKeys>
  </Spinner>
);

export default function App() {
  return (
    <Shell>
      <Global />
      <TitleBar>
        <AppIcon />
        <WindowTitle>DRPU Visitor ID Card Maker &amp; Gate Pass Software ( Document 1 )</WindowTitle>
        <WindowButton aria-label="Minimize"><Icon w={12} h={12}><path d="M1 6.500h10" stroke="#000" /></Icon></WindowButton>
        <WindowButton aria-label="Restore"><Icon w={12} h={12}><path d="M1.500 3.500h7v7h-7zM3.500 3.500v-2h7v7h-2" fill="none" stroke="#000" /></Icon></WindowButton>
        <WindowButton aria-label="Close"><Icon w={12} h={12}><path d="M1 1l10 10M11 1L1 11" stroke="#000" /></Icon></WindowButton>
      </TitleBar>
      <MenuBar>{menus.map((m) => <MenuLink href="#" key={m}>{m}</MenuLink>)}</MenuBar>
      <TabBar>{tabs.map((t) => <RibbonTab key={t} $on={t === "View"}>{t}</RibbonTab>)}</TabBar>
      <RibbonWrap>
        <Ribbon>
          <Panel>
            <PanelBody>
              <BigButton $w={69}><FrontIcon />Front</BigButton>
              <BigButton $w={71}><BackIcon />Back</BigButton>
              <BigButton $w={121}><SwapIcon />Copy Card Design</BigButton>
              <CheckGrid>{checks.map(([l, on]) => <CheckLabel key={l}><CheckBox defaultChecked={on} />{l}</CheckLabel>)}</CheckGrid>
            </PanelBody>
            <PanelCaption $indent={6}>Show/Hide</PanelCaption>
          </Panel>
          <Panel>
            <PanelBody>
              <ZoomStrip>
                <ToolButton aria-label="Fit" $h={30}><FitIcon /></ToolButton>
                <ToolButton aria-label="Actual size" $h={30}><OneIcon /></ToolButton>
                <VLine $w={6} />
                <ToolButton aria-label="Zoom in" $h={30}><Lens plus /></ToolButton>
                <Percent label="Ribbon zoom" />
                <ToolButton aria-label="Zoom out" $h={30} $w={36}><Lens /></ToolButton>
              </ZoomStrip>
            </PanelBody>
            <PanelCaption $indent={20}>Zoom</PanelCaption>
          </Panel>
          <Panel />
        </Ribbon>
      </RibbonWrap>

      <Toolbar>
        <Grip />
        {tools.map((t, i) => (t ? <ToolButton key={i} aria-label={t[0]} $w={t[0] === "Export" ? 35 : 32}>{t[1]}</ToolButton> : <VLine key={i} />))}
        <ToolButton $w={98}><AlignIcon />Alignment<Caret /></ToolButton>
        <ToolButton aria-label="Zoom in"><Lens plus /></ToolButton>
        <Percent label="Toolbar zoom" />
        <ToolButton aria-label="Zoom out"><Lens /></ToolButton>
      </Toolbar>

      <Work>
        <SideBar>
          <Grip $side />
          {sideTools.map((t, i) => (t ? <ToolButton key={i} aria-label={t[0]} $w={33} $h={35}>{t[1]}</ToolButton> : <HLine key={i} />))}
        </SideBar>

        <FormPane>
          <SideHeader><SideName>Back Side</SideName></SideHeader>
          <TwoCols>
            <PhotoGroup><Legend>Photo</Legend></PhotoGroup>
            <PhotoButtons>
              <PushButton $wide><CameraIcon />Camera</PushButton>
              <PushButton><BrowseIcon />Browse</PushButton>
            </PhotoButtons>
            <ColumnTitle>Show Label on Card</ColumnTitle>
            <ColumnTitle>Show Text on Card</ColumnTitle>
            <List $left>
              {captions.map((c) => (
                <Row key={c} $gap={5} $h={c === "Address :" ? 34 : 21}>
                  <CheckBox aria-label={`Show label ${c}`} />
                  {c === "Address :" ? <TallCaption aria-label={c} defaultValue={c} /> : <Caption aria-label={c} defaultValue={c} />}
                </Row>
              ))}
            </List>
            <List>
              {texts.map((t, i) => (
                <Row key={i} $gap={7} $h={t.tall ? 34 : 20}>
                  {t.tall ? (
                    <AddressBox>
                      <AddressText aria-label={captions[i]} defaultValue={t.v} />
                      <ScrollTrack $w={17}>
                        <ScrollButton $h={16} aria-label="Scroll up"><Chevron up c="#b5b5b5" /></ScrollButton>
                        <ScrollButton $h={16} aria-label="Scroll down"><Chevron c="#b5b5b5" /></ScrollButton>
                      </ScrollTrack>
                    </AddressBox>
                  ) : <Field aria-label={captions[i]} defaultValue={t.v} disabled={!t.on} />}
                  <CheckBox aria-label={`Show text ${captions[i]}`} defaultChecked={t.on} />
                </Row>
              ))}
              {manual.map((v, i) => (
                <Row key={v} $gap={0} $h={22}>
                  <ManualLabel><CheckBox />Manual</ManualLabel>
                  <Row $gap={6} $h={20}>
                    <Field aria-label={captions[10 + i]} defaultValue={v} $w={90} disabled />
                    <CheckBox aria-label={`Show text ${captions[10 + i]}`} />
                  </Row>
                </Row>
              ))}
            </List>
          </TwoCols>
          <FormActions>
            <AddButton $w={151} $h={30}><AddLabelIcon />Add New Label</AddButton>
            <Highlight><DbButton $w={155} $h={30}><DbIcon />Add Visitor details to DB</DbButton></Highlight>
          </FormActions>
        </FormPane>

        <CanvasPane>
          <Corner />
          <RulerBox><Ruler cm={5} length={204} /></RulerBox>
          <RulerBox><Ruler cm={8} length={323} vertical /></RulerBox>
          <Desk>
            <Card>
              <CardHead>Volttrans Technologies</CardHead>
              <CardLine $after={23}>Company Client</CardLine>
              <CardLine $after={17}>kathlene789@gmail.com</CardLine>
              <CardLine $after={67}>Keturah Tarvin</CardLine>
              <CardFoot>8760 Water Lane<br />Roslindale, MA 02131</CardFoot>
            </Card>
          </Desk>
        </CanvasPane>

        <PropsPane>
          <PropsTitle>Card Properties</PropsTitle>
          <PropTabs>
            {["General", "Background Format", "Image Properties", "Card Border"].map((t, i) => <PropTab key={t} $on={i === 0}>{t}</PropTab>)}
          </PropTabs>
          <PropPage>
            <PropBody>
              <Group $open>
                <Legend>Card Information</Legend>
                <InfoBody>
                  <Group>
                    <Legend>Card Shape</Legend>
                    <ShapeOption><ShapeIcon kind="rect" /><Radio name="shape" defaultChecked /><OptionText>Rectangle</OptionText></ShapeOption>
                    <ShapeOption><ShapeIcon kind="round" /><Radio name="shape" /><OptionText>Rounded Rectangle</OptionText></ShapeOption>
                    <ShapeOption><ShapeIcon kind="oval" /><Radio name="shape" /><OptionText>Ellipse</OptionText></ShapeOption>
                  </Group>
                  <NameGroup>
                    <RowLabel htmlFor="doc">Name</RowLabel><Field id="doc" defaultValue="Document 1" $w={160} />
                    <RowLabel htmlFor="sides">Card sides</RowLabel><Combo id="sides"><option>Two (Front and Back)</option></Combo>
                  </NameGroup>
                  <SizeGroup $open>
                    <Legend>Card Size (mm)</Legend>
                    <SizeBody>
                      <SizeGrid>
                        <RowLabel htmlFor="preset">Preset</RowLabel><Combo id="preset"><option>CUSTOM</option></Combo>
                        <RowLabel htmlFor="cat">Card Category</RowLabel><Combo id="cat" disabled><option>PVC_Card</option></Combo>
                      </SizeGrid>
                      <RowLabel htmlFor="sizes">Standard Card Sizes :</RowLabel>
                      <SizesBox>
                        <SizesList id="sizes" size={4} disabled defaultValue="CR80-Credit Card Size">
                          {["CR80-Credit Card Size", "CR79", "CR90-Over Sized", "CR100-Military Size"].map((s) => <option key={s}>{s}</option>)}
                        </SizesList>
                        <ScrollTrack $w={17}>
                          <ScrollButton $h={17} aria-label="Scroll up"><Chevron up /></ScrollButton>
                          <ScrollThumb $grow={1} />
                          <ScrollButton $h={17} aria-label="Scroll down"><Chevron /></ScrollButton>
                        </ScrollTrack>
                      </SizesBox>
                      <UnitRow><label htmlFor="unit">Measurement Unit :</label><Combo id="unit" $w={119}><option>Milimeters (mm)</option></Combo></UnitRow>
                      <MeasureRow>
                        <MeasureLabel htmlFor="mw"><span>Width</span><span>(mm)</span></MeasureLabel><SpinBox id="mw" value="54.10" />
                        <MeasureLabel htmlFor="mh" $indent={9}><span>Height</span><span>(mm)</span></MeasureLabel><SpinBox id="mh" value="85.60" />
                      </MeasureRow>
                      <Actions><PushButton $w={119} $h={23}>Get size from Printer</PushButton><PushButton $w={79} $h={23}>Apply</PushButton></Actions>
                    </SizeBody>
                  </SizeGroup>
                </InfoBody>
              </Group>
            </PropBody>
            <ScrollTrack $w={16}>
              <ScrollButton $h={17} aria-label="Scroll up"><Chevron up /></ScrollButton>
              <ScrollThumb $grow={366} />
              <ScrollRest $grow={10} />
              <ScrollButton $h={17} aria-label="Scroll down"><Chevron /></ScrollButton>
            </ScrollTrack>
          </PropPage>
        </PropsPane>
      </Work>

      <StatusBar>
        <Grip $w={11} />
        <StatusButton><FrontIcon w={27} h={22} />Front</StatusButton>
        <VLine $dark $h={28} $w={9} />
        <StatusButton $on><BackIcon w={27} h={22} />Back</StatusButton>
        <VLine $dark $h={28} $w={8} />
        <CopyStatus><SwapIcon w={32} h={26} />Copy current design to other side of Card</CopyStatus>
        <VLine $dark $h={28} $w={10} />
        <Social href="#" $c="#c2362a" aria-label="Google plus">g+</Social>
        <Social href="#" $c="#2c4f9a" aria-label="Facebook">f</Social>
        <Social href="#" $c="#34a3c8" aria-label="Twitter">t</Social>
        <Social href="#" $c="#fff" aria-label="Like"><Thumb /></Social>
        <Feedback href="#">
          <Thumb />
          <FeedbackText><FeedbackBlue>WE ARE GOOD OR BAD?</FeedbackBlue><FeedbackRed>LET OTHERS KNOW...</FeedbackRed></FeedbackText>
          <Thumb down />
        </Feedback>
      </StatusBar>
      <SiteRow><SiteBanner href="#">GreetingCardMakerSoftware.com</SiteBanner></SiteRow>
      <Defs />
    </Shell>
  );
}
